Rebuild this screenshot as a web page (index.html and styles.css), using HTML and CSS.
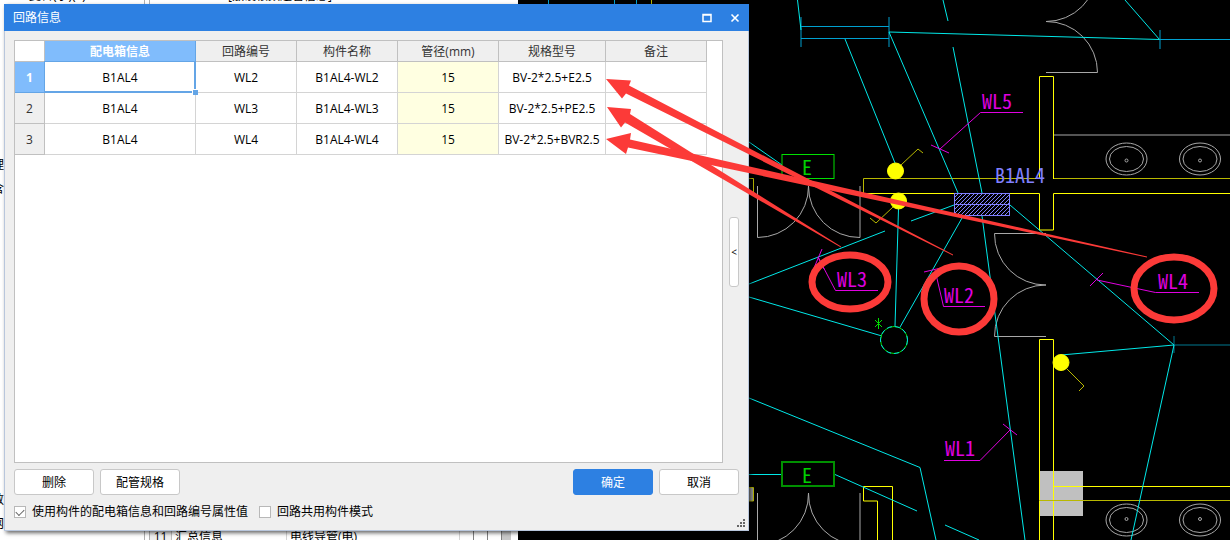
FILE: index.html
```
<!DOCTYPE html>
<html lang="zh-CN">
    <head>
        <meta charset="UTF-8">
        <meta name="viewport" content="width=device-width, initial-scale=1.0">
        <title>回路信息</title>
        <link rel="stylesheet" href="styles.css">
    </head>
    <body>
        <div class="workspace">
            <!-- 窗口后面的属性面板 -->
            <div class="panel">
                <div class="side">
                    <div class="menu">复合(示)(S)</div>
                    <div class="tree">
                        <div>理</div>
                        <div>含</div>
                    </div>
                    <div class="tree tree-end">
                        <div>数</div>
                        <div>网</div>
                    </div>
                </div>
                <div class="props">
                    <div class="props-title">[敷设根数连管信息]</div>
                    <div class="props-row">
                        <span class="no">11</span>
                        <span class="name">汇总信息</span>
                        <span class="value">电线导管(电)</span>
                        <span class="col"></span>
                        <span class="col"></span>
                        <span class="col"></span>
                        <span class="bar"></span>
                    </div>
                </div>
            </div>

            <!-- CAD 图纸 -->
            <svg class="drawing">
                <defs>
                    <pattern id="hatch" width="4" height="4" patternUnits="userSpaceOnUse">
                        <path d="M-1 5L5 -1M-1 1L1 -1M3 5L5 3" stroke="#8080ff"/>
                    </pattern>
                </defs>
                <g transform="translate(-518 0)">
                    <rect x="1039" y="471" width="44" height="45" fill="#c0c0c0"/>
                    <rect x="745" y="487" width="8" height="14" fill="#999"/>

                    <g class="white">
                        <path d="M757.5 186V237.500A51 51 0 0 0 808.500 186A51 51 0 0 0 860 237.500V186"/>
                        <path d="M757.5 493V545A51 51 0 0 0 808.500 493A51 51 0 0 0 860 545V493"/>
                        <path d="M1046 21.500A51 51 0 0 0 1097 -30M1046 21.500A51 51 0 0 1 1097.500 72.500H1046"/>
                        <path d="M1046 233.500H994.500A51 51 0 0 0 1046 285A51 51 0 0 0 994.500 336.500H1046"/>
                        <path d="M1054 135H1230"/>
                        <ellipse cx="1126.500" cy="159" rx="20.500" ry="16"/>
                        <ellipse cx="1126.500" cy="159" rx="17" ry="12.500"/>
                        <circle cx="1126.500" cy="160.500" r="1.500"/>
                        <ellipse cx="1200" cy="159" rx="20.500" ry="16"/>
                        <ellipse cx="1200" cy="159" rx="17" ry="12.500"/>
                        <circle cx="1200" cy="160.500" r="1.500"/>
                        <ellipse cx="1126.500" cy="520" rx="20.500" ry="16"/>
                        <ellipse cx="1126.500" cy="520" rx="17" ry="12.500"/>
                        <circle cx="1126.500" cy="519" r="1.500"/>
                        <ellipse cx="1200" cy="520" rx="20.500" ry="16"/>
                        <ellipse cx="1200" cy="520" rx="17" ry="12.500"/>
                        <circle cx="1200" cy="519" r="1.500"/>
                    </g>

                    <!-- 墙体 -->
                    <g class="yellow">
                        <path class="dim" d="M651.500 0V5M745 178.500H753.500V193.500M863.500 193V178.500H1039M1054 178.500H1230"/>
                        <path d="M863 193.500H1039.500V230H1053.500V193.500H1230M1039.500 179V76.500H1053.500V179"/>
                        <path d="M1039.500 540V339.500H1053.500V540M1054 486.500H1230"/>
                        <path class="dim" d="M1039 500.500H1230M745 487.500H753.500V501H745"/>
                        <path d="M892.500 540V486.500H863.500V501H877.500V540"/>
                    </g>

                    <!-- 电线 -->
                    <g class="cyan">
                        <path class="blue" d="M548.500 0V5M614.500 0V5M636.500 0V5M801 17V47M889 17V47M801 26.500H889M801 38.500H889M1160 30V49M1160 39.500H1230"/>
                        <path class="deep" d="M1174 336V353M1174 345H1230"/>
                        <path d="M797.500 0L801 30M845 39L895 163M889 32L958 193M889 32L1159.500 39.500L1125 0M943 0L948 21M953 47L982 193"/>
                        <path d="M982 216L1025 540M749 142L782 165M911 221L954 205M898.500 209L895 326M962 218L899.500 328"/>
                        <path d="M749 284L885 231M749 297L882 336M749 398L920 467.500L936 540M745 474.500H782M835 474.500L917 511M945 525L979 540"/>
                        <path d="M1010 205L1174 345L1061 355M1174 345L1131 540"/>
                    </g>

                    <g class="yellow">
                        <path class="dim" d="M901 165L918 149L923 153M893 207L876 223L870 218M1067 369L1084 386L1079 391"/>
                        <circle class="lamp" cx="895.500" cy="171" r="8"/>
                        <circle class="lamp" cx="898.500" cy="201" r="8"/>
                        <circle class="lamp" cx="1061" cy="362.500" r="8"/>
                    </g>

                    <g class="green">
                        <rect x="782" y="154.500" width="52" height="24"/>
                        <rect class="box" x="782" y="462" width="52" height="24"/>
                        <circle cx="894" cy="340" r="13.500"/>
                        <circle class="dash" cx="894" cy="340" r="13.500"/>
                        <path d="M878.500 318V329M875 320L882 327M882 320L875 327"/>
                        <text x="802" y="175">E</text>
                        <text x="802" y="483">E</text>
                    </g>

                    <!-- 配电箱 -->
                    <rect x="954.500" y="193.500" width="55" height="22" fill="#000"/>
                    <rect x="954.500" y="193.500" width="55" height="22" fill="url(#hatch)" stroke="#8080ff"/>
                    <path d="M954 204.500H1010" stroke="#8080ff"/>
                    <text class="box-name" x="995" y="183">B1AL4</text>

                    <!-- 回路编号 -->
                    <g class="magenta">
                        <path d="M1023 112.500H980.500L940 149M931 145L949 153"/>
                        <path d="M878 290.500H835.500L818 257M822 249L814 268M818 257L824 269"/>
                        <path d="M985 306.500H943.500L935 270M924 272L945 267"/>
                        <path d="M1199 292.500H1155.500L1097 280M1090 286L1103 273"/>
                        <path d="M944 460.500H980L1010 430M1003 424L1017 435"/>
                        <text x="982" y="109">WL5</text>
                        <text x="837" y="287">WL3</text>
                        <text x="944" y="303">WL2</text>
                        <text x="1158" y="289">WL4</text>
                        <text x="945" y="456">WL1</text>
                    </g>
                </g>
            </svg>
        </div>

        <!-- 回路信息窗口 -->
        <div class="dialog">
            <div class="title-bar">
                <span class="title">回路信息</span>
                <button class="win-btn" aria-label="最大化">
                    <svg width="10" height="10"><path d="M1 1.500H9V8.500H1Z M1 2H9" fill="none" stroke="#fff" stroke-width="1.500"/></svg>
                </button>
                <button class="win-btn" aria-label="关闭">
                    <svg width="10" height="10"><path d="M1.500 1.500L8.500 8.500M8.500 1.500L1.500 8.500" stroke="#fff" stroke-width="1.600"/></svg>
                </button>
            </div>
            <div class="dialog-body">
                <div class="content">
                    <div class="sheet">
                        <table class="grid">
                            <colgroup>
                                <col class="c-no"><col class="c-box"><col><col><col><col class="c-spec"><col>
                            </colgroup>
                            <thead>
                                <tr>
                                    <th class="corner"></th>
                                    <th class="active">配电箱信息</th>
                                    <th>回路编号</th>
                                    <th>构件名称</th>
                                    <th>管径(mm)</th>
                                    <th>规格型号</th>
                                    <th>备注</th>
                                </tr>
                            </thead>
                            <tbody>
                                <tr>
                                    <th class="active">1</th>
                                    <td class="selected">B1AL4</td>
                                    <td>WL2</td>
                                    <td>B1AL4-WL2</td>
                                    <td class="size">15</td>
                                    <td>BV-2*2.5+E2.5</td>
                                    <td></td>
                                </tr>
                                <tr>
                                    <th>2</th>
                                    <td>B1AL4</td>
                                    <td>WL3</td>
                                    <td>B1AL4-WL3</td>
                                    <td class="size">15</td>
                                    <td>BV-2*2.5+PE2.5</td>
                                    <td></td>
                                </tr>
                                <tr>
                                    <th>3</th>
                                    <td>B1AL4</td>
                                    <td>WL4</td>
                                    <td>B1AL4-WL4</td>
                                    <td class="size">15</td>
                                    <td>BV-2*2.5+BVR2.5</td>
                                    <td></td>
                                </tr>
                            </tbody>
                        </table>
                    </div>
                    <button class="fold">&lt;</button>
                </div>
                <div class="buttons">
                    <button class="btn">删除</button>
                    <button class="btn">配管规格</button>
                    <button class="btn primary">确定</button>
                    <button class="btn">取消</button>
                </div>
                <div class="options">
                    <label><input type="checkbox" checked>使用构件的配电箱信息和回路编号属性值</label>
                    <label><input type="checkbox">回路共用构件模式</label>
                </div>
            </div>
            <svg class="grip" width="8" height="8" fill="#666">
                <path d="M6 0h2v2h-2zM3 3h2v2h-2zM6 3h2v2h-2zM0 6h2v2h-2zM3 6h2v2h-2zM6 6h2v2h-2z"/>
            </svg>
        </div>

        <!-- 红色标注 -->
        <svg class="marks">
            <path d="M606 79L631 80.500L629 85.500L953 254.500V255.500L626 93.500L622 98.500Z"/>
            <path d="M607 107L631 109L630 114L841 246.500V247.500L625 122.500L621 127.500Z"/>
            <path d="M606 139L631 133L630 139.500L1147 256.500V257.500L628 147.500L626 154Z"/>
            <ellipse cx="850" cy="282" rx="38" ry="27"/>
            <ellipse cx="959" cy="299" rx="35" ry="33"/>
            <ellipse cx="1174" cy="288.500" rx="40" ry="31.500"/>
        </svg>
    </body>
</html>
```
FILE: styles.css
```
* {box-sizing: border-box;}

body {
    margin: 0;
    background: black;
    font-family: "Open Sans", "Noto Sans CJK SC", sans-serif;
    font-size: 12px;
    line-height: 16px;
    color: black;
}
button, input {
    font: inherit;
    margin: 0;
}

.workspace {
    display: flex;
    height: 100vh;
    overflow: hidden;
}

/* 属性面板 */
.panel {
    flex: 0 0 518px;
    display: flex;
    gap: 4px;
    background: white;
}
.side {
    width: 145px;
    display: flex;
    flex-direction: column;
    border-right: 1px solid #b0b0b0;
}
.menu {
    padding-left: 29px;
    margin-top: -12px;
}
.tree {
    display: flex;
    flex-direction: column;
    gap: 8px;
    margin-top: 153px;
    margin-left: -8px;
}
.tree-end {
    margin-top: auto;
    margin-bottom: 8px;
}
.props {
    flex: 1;
    display: flex;
    flex-direction: column;
    justify-content: space-between;
    border-left: 1px solid #b0b0b0;
}
.props-title {
    padding-left: 78px;
    margin-top: -12px;
}
.props-row {
    display: flex;
    height: 11px;
    padding-right: 4px;
}
.no {
    width: 22px;
    text-align: center;
    background: #efefef;
    border-right: 1px solid #c0c0c0;
}
.name {
    width: 115px;
    padding-left: 3px;
    border-right: 1px solid #d4d4d4;
}
.value {
    flex: 1;
    padding-left: 3px;
    border-right: 1px solid #d4d4d4;
}
.col {
    width: 14px;
    border-right: 1px solid #808080;
}
.bar {
    width: 12px;
    background: #c8c8c8;
    border-right: 3px solid white;
}

/* 图纸 */
.drawing {
    flex: 1;
    min-width: 0;
    height: 100%;
    fill: none;
    font-family: "Noto Sans Mono CJK SC", "Liberation Mono", monospace;
    font-size: 20px;
    font-weight: 300;
}
.white {stroke: #a8a8a8;}
.yellow {stroke: #ffff00;}
.yellow .dim {stroke: #b8b800;}
.yellow .lamp {fill: yellow;}
.cyan {stroke: #00e8e8;}
.cyan .blue {stroke: #00a0d0;}
.cyan .deep {stroke: #007890;}
.green {stroke: #00e000;}
.green .box {
    stroke: #009000;
    stroke-width: 2;
}
.green .dash {
    stroke: #00d8e8;
    stroke-dasharray: 5 3;
}
.drawing text {stroke: none;}
.green text {fill: #00d000;}
.magenta {stroke: #e000e0;}
.magenta text {fill: #e000e0;}
.box-name {fill: #8080ff;}

/* 窗口 */
.dialog {
    position: absolute;
    left: 4px;
    top: 4px;
    width: 745px;
    height: 527px;
    display: flex;
    flex-direction: column;
    background: #efefef;
    box-shadow: 2px 2px 4px rgba(0, 0, 0, 0.6);
}
.title-bar {
    display: flex;
    align-items: center;
    height: 27px;
    padding: 0 5px 0 9px;
    color: white;
    background: #2d80e2;
}
.title {flex: 1;}
.win-btn {
    display: flex;
    align-items: center;
    justify-content: center;
    width: 18px;
    height: 18px;
    margin-left: 10px;
    padding: 0;
    border: 0;
    background: none;
}
.dialog-body {
    flex: 1;
    display: flex;
    flex-direction: column;
    gap: 6px;
    padding: 9px;
    border: 1px solid #b8c6dc;
    border-top: 0;
}
.content {
    flex: 1;
    display: flex;
    align-items: center;
    gap: 6px;
}
.sheet {
    flex: 1;
    align-self: stretch;
    background: white;
    border: 1px solid #c0c0c0;
}

.grid {
    width: 692px;
    table-layout: fixed;
    border-collapse: separate;
    border-spacing: 0;
    text-align: center;
}
.grid col {width: 101px;}
.grid .c-no {width: 30px;}
.grid .c-box {width: 151px;}
.grid .c-spec {width: 107px;}
.grid th {
    height: 21px;
    padding: 2px 0 0;
    font-weight: normal;
    color: #333;
    background: #efefef;
    border: solid #c0c0c0;
    border-width: 0 1px 1px 0;
}
.grid td {
    height: 31px;
    padding: 2px 0 0;
    white-space: nowrap;
    border: solid #d4d4d4;
    border-width: 0 1px 1px 0;
}
.grid .corner {background: white;}
.grid .active {
    font-weight: bold;
    color: white;
    background: #80bcfc;
    border-color: #64a5e6;
}
.grid .size {background: #ffffe1;}
.grid .selected {position: relative;}
.selected::before {
    content: "";
    position: absolute;
    inset: -1px;
    border: 2px solid #64a5e6;
    border-width: 1px 2px 2px 1px;
}
.selected::after {
    content: "";
    position: absolute;
    right: -3px;
    bottom: -3px;
    width: 5px;
    height: 5px;
    background: #64a5e6;
    border: solid white;
    border-width: 1px 0 0 1px;
}

.fold {
    width: 10px;
    height: 70px;
    padding: 0;
    font-size: 10px;
    color: black;
    background: white;
    border: 1px solid #c8c8c8;
    border-radius: 3px;
}
.buttons {
    display: flex;
    gap: 6px;
}
.btn {
    width: 80px;
    height: 26px;
    padding: 2px 0 0;
    color: black;
    background: white;
    border: 1px solid #c8c8c8;
    border-radius: 3px;
}
.primary {
    margin-left: auto;
    color: white;
    background: #2d80e2;
    border-color: #2d80e2;
}
.options {
    display: flex;
    gap: 11px;
    padding: 3px 0 1px;
}
.options label {
    display: flex;
    align-items: center;
    gap: 6px;
}
.options input {
    appearance: none;
    width: 12px;
    height: 12px;
    border: 1px solid #b8b8b8;
    background: white;
}
.options input:checked::before {
    content: "";
    display: block;
    width: 7px;
    height: 4px;
    margin: 2px 1px;
    border: solid #666;
    border-width: 0 0 1px 1px;
    transform: rotate(-45deg);
}
.grip {
    position: absolute;
    right: 4px;
    bottom: 4px;
}

/* 标注 */
.marks {
    position: absolute;
    left: 0;
    top: 0;
    width: 100%;
    height: 100%;
    fill: #fc3a38;
    pointer-events: none;
}
.marks ellipse {
    fill: none;
    stroke: #fc3a38;
    stroke-width: 7;
}
```
